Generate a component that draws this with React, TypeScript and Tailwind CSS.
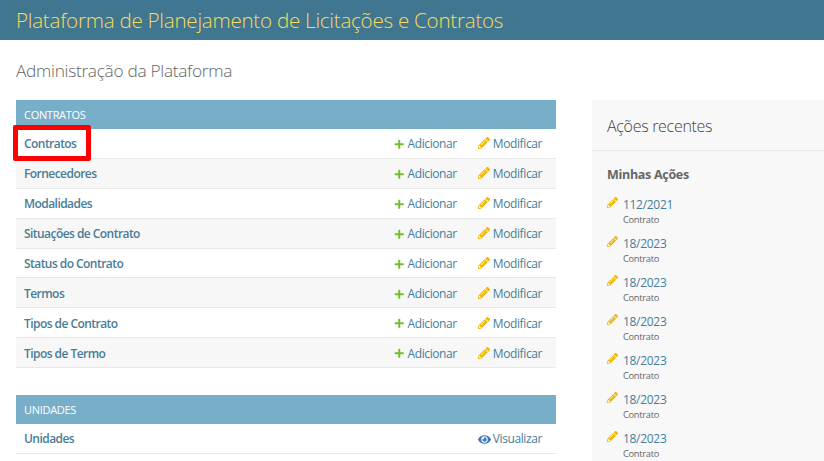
import React from "react";
import { FaPlus, FaPencilAlt, FaEye } from "react-icons/fa";

const contratos = [
    "Contratos",
    "Fornecedores",
    "Modalidades",
    "Situações de Contrato",
    "Status do Contrato",
    "Termos",
    "Tipos de Contrato",
    "Tipos de Termo",
];

const recentes = ["112/2021", "18/2023", "18/2023", "18/2023", "18/2023", "18/2023", "18/2023"];

const Row = ({ name, alt, view }: { name: string; alt: boolean; view?: boolean }) => (
    <div
        className={`flex items-center h-[29.875px] pl-2 pr-[14px] pt-[2px] border-b border-[#e8e8e8] text-[12px] tracking-[-0.4px] ${
            alt ? "bg-[#f7f7f7]" : "bg-white"
        }`}
    >
        <span className="flex-1 font-semibold tracking-[-0.55px] text-[#4a7c95]">{name}</span>
        {view ? (
            <span className="flex items-center text-[#447e9b]">
                <FaEye className="text-[13px] text-[#3f78b8] mr-[2px]" />
                Visualizar
            </span>
        ) : (
            <>
                <span className="flex items-center text-[#447e9b]">
                    <FaPlus className="text-[10.5px] text-[#70bf2b] mr-[3px]" />
                    Adicionar
                </span>
                <span className="flex items-center text-[#447e9b] ml-[21px]">
                    <FaPencilAlt className="text-[12px] text-[#efb80b] mr-[3px] mb-[2px]" />
                    Modificar
                </span>
            </>
        )}
    </div>
);

const Caption = ({ title }: { title: string }) => (
    <div className="h-[29px] flex items-center px-2 pt-[2px] bg-[#79aec8] text-white text-[11px] font-normal uppercase">
        {title}
    </div>
);

const App = () => {
    return (
        <div className="w-[824px] h-[461px] overflow-hidden bg-white font-['Open_Sans',sans-serif] tracking-[-0.3px]">
            <header className="h-10 bg-[#417690] flex items-center px-4">
                <h1 className="text-[20.6px] font-light text-[#f5dd5d] tracking-[-0.25px]">
                    Plataforma de Planejamento de Licitações e Contratos
                </h1>
            </header>
            <div className="px-4 pt-[20px]">
                <h2 className="text-[17.3px] leading-[22px] font-light text-[#666]">
                    Administração da Plataforma
                </h2>
                <div className="flex mt-[18px]">
                    <main className="w-[540px] shrink-0">
                        <section className="relative">
                            <Caption title="Contratos" />
                            {contratos.map((name, i) => (
                                <Row key={name} name={name} alt={i % 2 === 1} />
                            ))}
                            <div className="absolute left-[-3px] top-[25px] w-[78px] h-[36px] border-[5px] border-[#ff0000] rounded-[2px]" />
                        </section>
                        <section className="mt-[27px]">
                            <Caption title="Unidades" />
                            <Row name="Unidades" alt={false} view />
                        </section>
                    </main>
                    <aside className="w-[232px] ml-9 shrink-0 h-[400px] bg-[#f8f8f8]">
                        <h3 className="h-[51px] flex items-center px-[15px] pt-[1px] border-b border-[#e8e8e8] text-[16px] font-light text-[#444]">
                            Ações recentes
                        </h3>
                        <div className="px-[15px] pt-[15px]">
                            <h4 className="text-[12.5px] leading-[18px] font-bold text-[#666]">Minhas Ações</h4>
                            <ul className="mt-[12px]">
                                {recentes.map((item, i) => (
                                    <li key={i} className="h-[39px] pl-[16px] relative">
                                        <FaPencilAlt className="absolute left-0 top-[1px] text-[11px] text-[#efb80b]" />
                                        <div className="text-[12px] leading-[17px] text-[#447e9b]">{item}</div>
                                        <div className="text-[9.3px] leading-[14px] text-[#666]">Contrato</div>
                                    </li>
                                ))}
                            </ul>
                        </div>
                    </aside>
                </div>
            </div>
        </div>
    );
};

export default App;
